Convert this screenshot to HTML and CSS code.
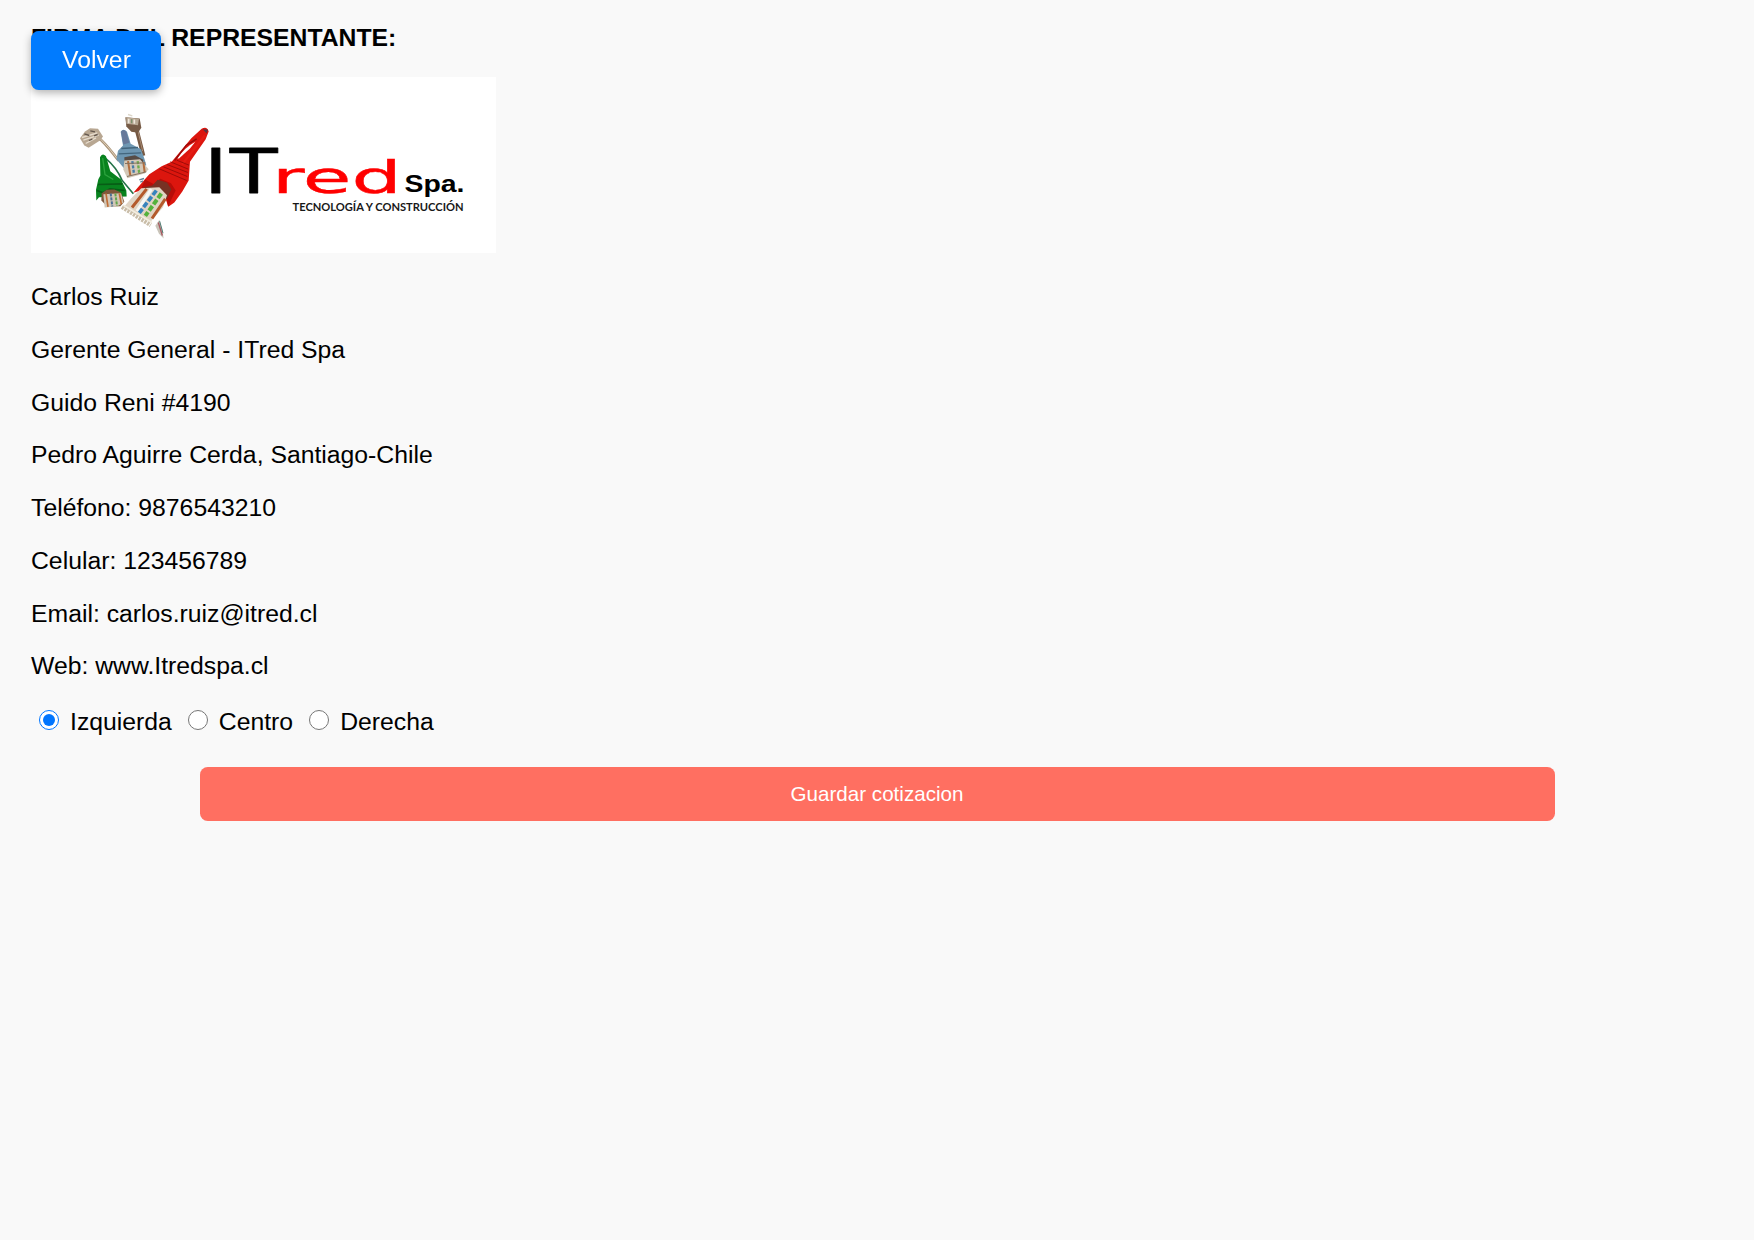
FILE: index.html
```html
<!DOCTYPE html>
<html lang="es">
<head>
<meta charset="utf-8">
<title>Firma del representante</title>
<link rel="stylesheet" href="styles.css">
</head>
<body>
<a class="back">Volver</a>
<main class="signature">
  <h3 class="title">FIRMA DEL REPRESENTANTE:</h3>
  <svg class="logo" viewBox="0 0 465 176" role="img" aria-label="ITred Spa">
    <rect width="465" height="176" fill="#fff"/>
    <g transform="translate(39 23.500) scale(.33333)">
      <!-- loose beige plug -->
      <path d="M91 116Q116 140 146 181" fill="none" stroke="#aa9478" stroke-width="8"/>
      <path d="M91 115Q116 139 146 180" fill="none" stroke="#ded0bc" stroke-width="3"/>
      <path d="M30 113L45 93 60 83 84 85 99 108 91 119 56 142 43 135Z" fill="#b8a792"/>
      <path d="M36 111L82 97M40 119L86 104M47 129L78 112" stroke="#e6dccd" stroke-width="4"/>
      <path d="M43 100L58 105M61 91L75 94M57 120L67 116M72 106L83 102" stroke="#64584e" stroke-width="4"/>
      <!-- brown plug -->
      <path d="M200 88Q208 118 220 166" fill="none" stroke="#765842" stroke-width="12"/>
      <path d="M204 91Q210 118 218 152" fill="none" stroke="#a98b73" stroke-width="3"/>
      <path d="M166 50L209 54 214 82 204 97 184 94 169 78Z" fill="#765b46"/>
      <path d="M169 50L207 55 204 74 169 70Z" fill="#b9a995"/>
      <path d="M176 55V68M193 57V70" stroke="#eee6da" stroke-width="5"/>
      <path d="M185 56V68" stroke="#79906b" stroke-width="4"/>
      <path d="M174 42L187 46" stroke="#ddd7ca" stroke-width="4"/>
      <!-- blue plug -->
      <path d="M152 94Q160 81 171 94L182 130 213 146 223 174 229 194 214 202 188 170 162 203 139 176 144 151 159 135Z" fill="#6e97b2"/>
      <path d="M153 94Q160 83 169 94L178 127 160 132Z" fill="#66799a"/>
      <path d="M154 144L204 141M146 160L213 157" stroke="#43667d" stroke-width="4"/>
      <path d="M163 170L195 164 220 178 215 203 164 200Z" fill="#574c45"/>
      <path d="M163 180L210 176 236 206 224 219 172 233 160 207Z" fill="#d3c8b8"/>
      <path d="M174 182L181 225M220 184L224 215" stroke="#b36d3e" stroke-width="6"/>
      <path d="M187 182L192 221" stroke="#477ca9" stroke-width="7" stroke-dasharray="9 4"/>
      <path d="M203 182L208 220" stroke="#6cad4c" stroke-width="7" stroke-dasharray="9 4"/>
      <path d="M165 189L226 187M171 228L229 214" stroke="#84705e" stroke-width="3"/>
      <!-- green plug -->
      <path d="M106 173Q140 201 156 239L190 280" fill="none" stroke="#247348" stroke-width="5"/>
      <path d="M90 170Q97 155 108 167L121 212 153 237 169 270 170 288 87 290 79 300 78 268 85 236 91 225Z" fill="#08821e"/>
      <path d="M98 173L105 222 130 237" stroke="#2ba23d" stroke-width="4" fill="none"/>
      <path d="M84 252L157 250M81 270L99 277 120 265 164 270" fill="none" stroke="#075d16" stroke-width="5"/>
      <path d="M95 278L110 268 133 267 153 276 163 304 151 317 112 319 94 300Z" fill="#7e573a"/>
      <path d="M100 281L153 278 161 306 141 318 104 321Z" fill="#d2c6b5"/>
      <path d="M108 279L114 319M148 279L154 311" stroke="#c06d35" stroke-width="5"/>
      <path d="M122 279L127 318" stroke="#4b7096" stroke-width="6" stroke-dasharray="9 3"/>
      <path d="M136 279L141 316" stroke="#62a64a" stroke-width="6" stroke-dasharray="9 3"/>
      <!-- red plug -->
      <path d="M305 184L364 113 395 85Q411 76 416 93L407 116 360 184 356 240 337 273 313 306 295 319 274 259 210 271 190 277 226 235 238 221 275 197Z" fill="#dc160e"/>
      <path d="M322 174Q343 142 376 124L360 144 327 174Z" fill="#fff"/>
      <path d="M314 180L349 134 380 115" fill="none" stroke="#960b0b" stroke-width="4"/>
      <path d="M398 86L414 87 410 99Z" fill="#5c3340"/>
      <path d="M405 104L336 192" fill="none" stroke="#e51c13" stroke-width="7"/>
      <path d="M301 184L355 206M291 192L354 216M280 199L352 228M268 205L350 240M320 179L357 194" fill="none" stroke="#9e0b08" stroke-width="3"/>
      <path d="M225 237L252 251 271 235 303 248 317 270 294 318 286 270 260 258 214 263Z" fill="#b80d08"/>
      <path d="M217 261L247 255 263 238 291 246 304 266 290 297 277 278Z" fill="#773224"/>
      <path d="M214 263L268 260 291 284 279 320 240 366 160 321 184 293Z" fill="#e0d4c4"/>
      <path d="M230 265L186 321M286 295L246 354" stroke="#b45a2c" stroke-width="9"/>
      <path d="M244 266L201 332" stroke="#f6f7f5" stroke-width="10"/>
      <path d="M259 270L208 337" stroke="#3783bd" stroke-width="11" stroke-dasharray="17 6"/>
      <path d="M274 279L226 346" stroke="#55b13c" stroke-width="12" stroke-dasharray="17 6"/>
      <path d="M156 319L242 374" stroke="#c9bda8" stroke-width="13" stroke-dasharray="7 3"/>
      <path d="M160 314L246 366" stroke="#f3eddf" stroke-width="5"/>
      <path d="M208 238L222 234M211 245L219 241" stroke="#608095" stroke-width="4"/>
      <path d="M256 376L268 358 277 388 281 414 267 400Z" fill="#c9c4b9"/>
      <path d="M265 366L277 405" stroke="#a95961" stroke-width="4"/>
      <path d="M269 362L279 398" stroke="#517c75" stroke-width="3"/>
    </g>
    <text class="logo-it" transform="translate(173 115.500) scale(1.33 1)">IT</text>
    <text class="logo-red" transform="translate(241 115.500) scale(1.757 1)">red</text>
    <text class="logo-spa" x="373.500" y="115" textLength="60" lengthAdjust="spacingAndGlyphs">Spa.</text>
    <text class="logo-tag" x="261.500" y="133.500" textLength="171" lengthAdjust="spacingAndGlyphs">TECNOLOGÍA Y CONSTRUCCIÓN</text>
  </svg>
  <p>Carlos Ruiz</p>
  <p>Gerente General - ITred Spa</p>
  <p>Guido Reni #4190</p>
  <p>Pedro Aguirre Cerda, Santiago-Chile</p>
  <p>Teléfono: 9876543210</p>
  <p>Celular: 123456789</p>
  <p>Email: carlos.ruiz@itred.cl</p>
  <p>Web: www.Itredspa.cl</p>
  <div class="align">
    <label><input type="radio" name="align" checked>Izquierda</label>
    <label><input type="radio" name="align">Centro</label>
    <label><input type="radio" name="align">Derecha</label>
  </div>
</main>
<button class="save" type="button">Guardar cotizacion</button>
</body>
</html>
```
FILE: styles.css
```css
body {
  margin: 0;
  padding: 24px 31px;
  background: #f9f9f9;
  color: #000;
  font: 24.75px/27.9px "Liberation Sans", Arial, sans-serif;
}
.back {
  position: fixed;
  top: 31px;
  left: 31px;
  box-sizing: border-box;
  width: 130px;
  height: 58.5px;
  padding: 15px 0 15px 1px;
  border-radius: 7.75px;
  background: #007bff;
  color: #fff;
  text-align: center;
  box-shadow: 0 3px 8px rgba(0, 0, 0, .3);
}
.title {
  margin: 0 0 25px;
  font-size: 24.75px;
  line-height: 28px;
}
.logo {
  display: block;
  width: 465px;
  height: 176px;
  margin-bottom: 30.3px;
}
.logo-it {
  font: 64px "Liberation Sans", Arial, sans-serif;
  stroke: #000;
  stroke-width: .8px;
  stroke-linejoin: round;
}
.logo-red {
  font: 45px "DejaVu Sans", sans-serif;
  fill: #f00;
  stroke: #f00;
  stroke-width: .4px;
}
.logo-spa { font: bold 24px "Liberation Sans", Arial, sans-serif; }
.logo-tag { font: bold 11.8px Lato, sans-serif; fill: #181818; }
.signature p { margin: 0 0 24.8px; }
.align {
  display: flex;
  gap: 8px;
  margin-top: 28px;
}
.align label {
  display: flex;
  align-items: flex-start;
}
.align input {
  width: 20px;
  height: 20px;
  margin: 2px 11px 0 8px;
}
.save {
  display: block;
  width: 1355px;
  height: 54px;
  margin: 31.3px auto 0;
  padding: 0;
  border: 0;
  border-radius: 7.75px;
  background: #ff6f61;
  color: #fff;
  font: 20.6px "Liberation Sans", Arial, sans-serif;
}
```
